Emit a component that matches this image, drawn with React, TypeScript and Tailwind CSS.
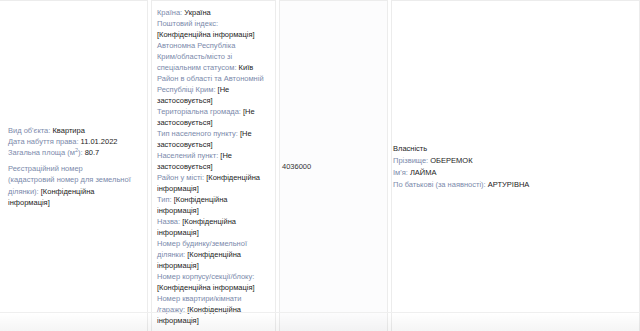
import React from 'react';

interface Field {
    label: string;
    value: string;
}

// слеш без переносу рядка (як у референсі)
const S = '/\u2060';

const address: Field[] = [
    { label: 'Країна', value: 'Україна' },
    { label: 'Поштовий індекс', value: '[Конфіденційна інформація]' },
    { label: `Автономна Республіка Крим${S}область${S}місто зі спеціальним статусом`, value: 'Київ' },
    { label: 'Район в області та Автономній Республіці Крим', value: '[Не застосовується]' },
    { label: 'Територіальна громада', value: '[Не застосовується]' },
    { label: 'Тип населеного пункту', value: '[Не застосовується]' },
    { label: 'Населений пункт', value: '[Не застосовується]' },
    { label: 'Район у місті', value: '[Конфіденційна інформація]' },
    { label: 'Тип', value: '[Конфіденційна інформація]' },
    { label: 'Назва', value: '[Конфіденційна інформація]' },
    { label: `Номер будинку${S}земельної ділянки`, value: '[Конфіденційна інформація]' },
    { label: `Номер корпусу${S}секції${S}блоку`, value: '[Конфіденційна інформація]' },
    { label: `Номер квартири${S}кімнати ${S}гаражу`, value: '[Конфіденційна інформація]' },
];

const owner: Field[] = [
    { label: 'Прізвище', value: 'ОБЕРЕМОК' },
    { label: "Ім'я", value: 'ЛАЙМА' },
    { label: 'По батькові (за наявності)', value: 'АРТУРІВНА' },
];

const Row: React.FC<Field> = ({ label, value }) => (
    <div>
        <span className="text-[#7b8aab]">{label}: </span>
        <span className="text-[#1c1c1c]">{value}</span>
    </div>
);

const App: React.FC = () => {
    return (
        <div className="relative w-[640px] h-[331px] overflow-hidden bg-white font-['Liberation_Sans',Arial,sans-serif] text-[7.5px] leading-[11px] text-[#1c1c1c]">
            <div className="flex gap-[3px] items-stretch">
                {/* Об'єкт */}
                <div className="w-[148px] shrink-0 border border-l-0 border-[#ececec] pl-[8px] pr-[15px] flex flex-col justify-center">
                    <div>
                        <span className="text-[#7b8aab]">Вид об'єкта: </span>Квартира
                    </div>
                    <div>
                        <span className="text-[#7b8aab]">Дата набуття права: </span>11.01.2022
                    </div>
                    <div className="leading-[12px]">
                        <span className="text-[#7b8aab]">
                            Загальна площа (м<sup className="text-[5.5px]">2</sup>):{' '}
                        </span>
                        80.7
                    </div>
                    <div className="mt-[4px] leading-[11.5px]">
                        <span className="text-[#7b8aab]">
                            Реєстраційний номер
                            <br />
                            (кадастровий номер для земельної ділянки):{' '}
                        </span>
                        [Конфіденційна інформація]
                    </div>
                </div>

                {/* Адреса */}
                <div className="w-[125px] shrink-0 border border-[#ececec] pl-[5px] pr-[6px] pt-[6px] pb-[6px] flex flex-col justify-center">
                    {address.map((f) => (
                        <Row key={f.label} label={f.label} value={f.value} />
                    ))}
                </div>

                {/* Вартість */}
                <div className="w-[109px] shrink-0 border border-[#ececec] bg-[#fcfcfd] pl-[2px] pr-[4px] flex flex-col justify-center">
                    <div className="text-[#333]">4036000</div>
                </div>

                {/* Власник */}
                <div className="w-[249px] shrink-0 border border-[#ececec] pl-[1px] pr-[4px] flex flex-col justify-center leading-[12px]">
                    <div>Власність</div>
                    {owner.map((f) => (
                        <Row key={f.label} label={f.label} value={f.value} />
                    ))}
                </div>
            </div>

            {/* нижнє затінення */}
            <div className="absolute left-0 right-0 bottom-0 h-[19px] border-t border-[#efefef] bg-gradient-to-b from-white/0 to-black/[0.04] pointer-events-none" />
        </div>
    );
};

export default App;
